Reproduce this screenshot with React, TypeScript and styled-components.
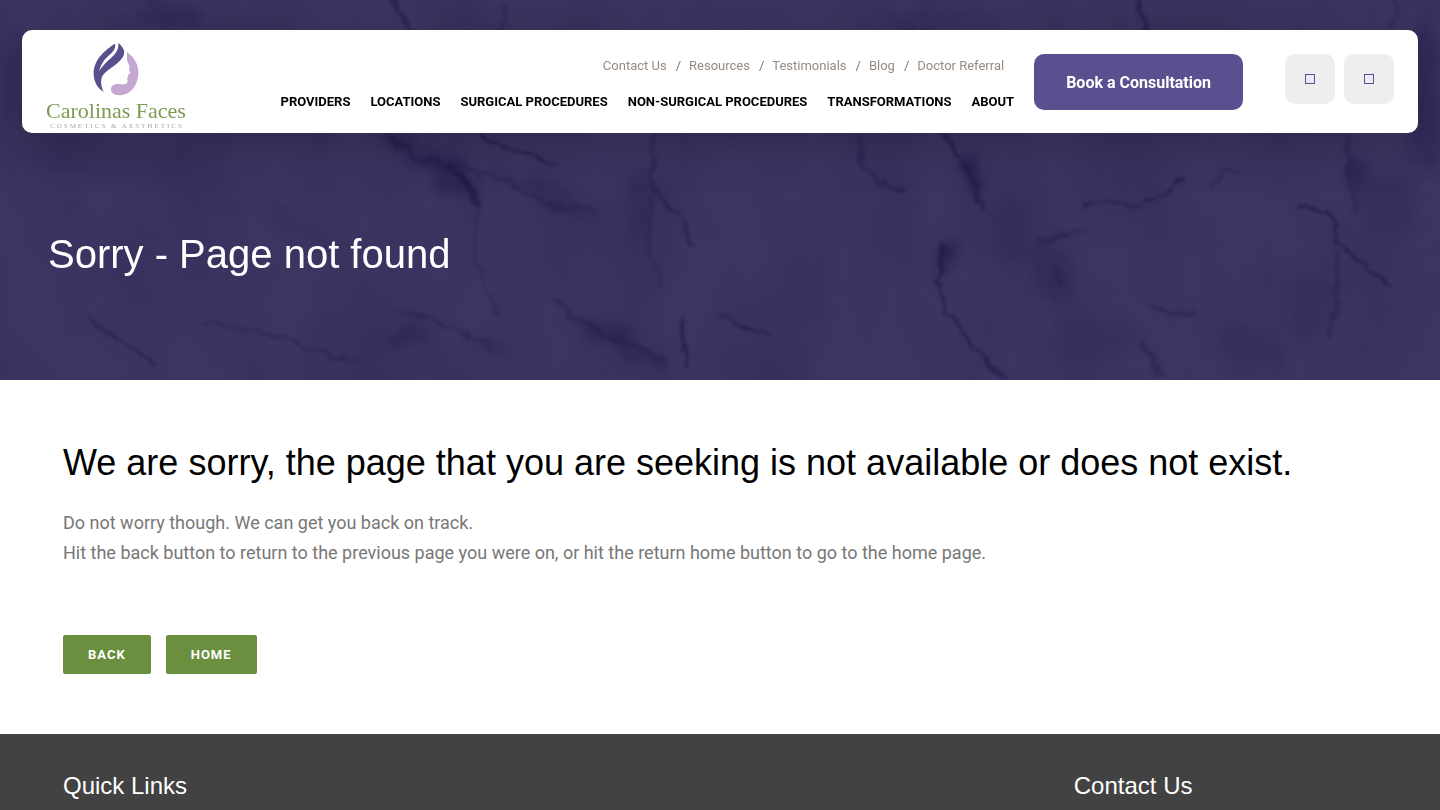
import React from "react";
import styled, { createGlobalStyle } from "styled-components";

const GlobalStyle = createGlobalStyle`
  *, *::before, *::after { box-sizing: border-box; }
  body { margin: 0; background: #fff; font-family: Roboto, "Liberation Sans", sans-serif; }
  h1, h2, h3, p, ul { margin: 0; padding: 0; }
  a { color: inherit; text-decoration: none; }
`;

const Page = styled.div`
  min-height: 100vh;
  display: flex;
  flex-direction: column;
`;

const Hero = styled.section`
  position: relative;
  isolation: isolate;
  padding: 30px 22px 100px;
  background: #3a335f;
`;

const MarbleSvg = styled.svg`
  position: absolute;
  inset: 0;
  width: 100%;
  height: 100%;
  z-index: -1;
`;

const Header = styled.header`
  display: flex;
  align-items: flex-start;
  height: 103px;
  padding: 0 24px;
  border-radius: 10px;
  background: #fff;
  box-shadow: 0 10px 50px rgba(0, 0, 0, 0.2);
`;

const LogoLink = styled.a`
  display: flex;
  flex-direction: column;
  align-items: center;
  padding-top: 12px;
  white-space: nowrap;
`;

const LogoName = styled.span`
  font-family: "Liberation Serif", serif;
  font-size: 22px;
  line-height: 24px;
  color: #7a9c51;
`;

const LogoTag = styled.span`
  padding-left: 2px;
  font-family: "Liberation Serif", serif;
  font-size: 7px;
  line-height: 6px;
  letter-spacing: 2px;
  color: #a9a6b2;
`;

const Menus = styled.div`
  flex: 1;
  display: flex;
  flex-direction: column;
  align-items: flex-end;
  padding: 26px 20px 0 0;
  white-space: nowrap;
`;

const TopList = styled.ul`
  display: flex;
  list-style: none;
  padding-right: 10px;
  font-size: 13px;
  line-height: 20px;
  color: #978b80;

  li + li::before {
    content: "/";
    padding: 0 8px 0 9px;
    color: #777;
  }
`;

const MainList = styled.ul`
  display: flex;
  gap: 20px;
  margin-top: 16px;
  list-style: none;
  font-size: 13px;
  font-weight: 700;
  line-height: 20px;
  text-transform: uppercase;
  color: #000;
`;

const BookLink = styled.a`
  margin-top: 24px;
  padding: 2px 32px 0;
  border-radius: 10px;
  background: #5b508f;
  color: #fff;
  font-size: 16px;
  font-weight: 700;
  line-height: 54px;
  white-space: nowrap;
`;

const Tools = styled.div`
  display: flex;
  gap: 9px;
  margin: 24px 0 0 42px;
`;

const ToolButton = styled.button`
  display: grid;
  place-items: center;
  width: 50px;
  height: 50px;
  padding: 0;
  border: 0;
  border-radius: 10px;
  background: #eee;
  cursor: pointer;
`;

const HeroTitle = styled.h1`
  margin: 95px 26px 0;
  font-family: "Liberation Sans", sans-serif;
  font-size: 40px;
  font-weight: 400;
  line-height: 52px;
  color: #fff;
`;

const Content = styled.main`
  padding: 60px 63px;
`;

const Title = styled.h2`
  font-family: "Liberation Sans", sans-serif;
  font-size: 36px;
  font-weight: 400;
  line-height: 46px;
  color: #000;
`;

const Copy = styled.p`
  margin-top: 22px;
  font-size: 18px;
  line-height: 30px;
  color: #777;
`;

const Actions = styled.div`
  display: flex;
  gap: 15px;
  margin-top: 67px;
`;

const ActionButton = styled.button`
  height: 39px;
  padding: 0 25px;
  border: 0;
  border-radius: 2px;
  background: #6a903f;
  color: #fff;
  font-family: inherit;
  font-size: 13px;
  font-weight: 700;
  letter-spacing: 1px;
  text-transform: uppercase;
  cursor: pointer;
`;

const Footer = styled.footer`
  flex: 1;
  display: grid;
  grid-template-columns: 10fr 3fr;
  padding: 36px 63px 8px;
  background: #424242;
`;

const FooterTitle = styled.h3`
  font-family: "Liberation Sans", sans-serif;
  font-size: 24px;
  font-weight: 400;
  line-height: 32px;
  color: #fff;
`;

const topLinks = ["Contact Us", "Resources", "Testimonials", "Blog", "Doctor Referral"];
const mainLinks = [
  "Providers",
  "Locations",
  "Surgical Procedures",
  "Non-Surgical Procedures",
  "Transformations",
  "About",
];

// Marble veins: path data, line width, strength
const veins: [string, number, number][] = [
  ["M393 -4 L402 14 L413 34", 5, 0.55],
  ["M507 4 L500 34", 3, 0.4],
  ["M910 26 L904 40", 3, 0.5],
  ["M1138 -4 L1142 14 L1146 34", 4, 0.7],
  ["M1396 -4 L1392 34", 3, 0.4],
  ["M475 130 L490 142 L514 152 L535 157 L556 164", 3, 0.75],
  ["M386 137 L413 157 L448 167", 5, 0.45],
  ["M448 165 Q464 176 470 190 L477 208", 6, 0.7],
  ["M477 208 L475 253 L487 297 L500 317", 2, 0.4],
  ["M448 160 L500 180 L551 205 L597 210", 4, 0.3],
  ["M654 133 L652 190 L680 217 L693 247", 3, 0.5],
  ["M652 190 L648 250 L662 290", 4, 0.25],
  ["M202 323 L243 328 L285 340 L318 350 L356 360", 2, 0.6],
  ["M90 317 L108 333 L133 348 L156 363", 3, 0.55],
  ["M556 298 L569 317 L611 337 L666 360", 4, 0.4],
  ["M680 318 L684 345 L686 368", 4, 0.7],
  ["M399 310 L441 323 L487 343 L490 352", 2, 0.5],
  ["M858 133 L862 167 L876 182 L904 190", 4, 0.5],
  ["M943 130 L959 157 L972 180 L982 207", 4, 0.6],
  ["M945 245 L940 268 L936 284", 5, 0.6],
  ["M936 284 L945 310 L977 350 L1006 382", 3, 0.65],
  ["M1083 207 L1106 202 L1133 208 L1161 195 L1184 178", 3, 0.7],
  ["M1210 190 L1222 172 L1240 172", 3, 0.4],
  ["M1041 240 L1062 236 L1087 226", 3, 0.45],
  ["M1055 268 L1062 288", 5, 0.4],
  ["M718 315 L735 325 L754 332 L772 333", 3, 0.7],
  ["M1300 206 L1316 209 L1331 212 L1334 226 L1342 247 L1363 263 L1390 287", 3, 0.75],
  ["M1335 250 L1337 297 L1328 337", 3, 0.4],
  ["M1147 303 L1175 315 L1197 310", 3, 0.5],
  ["M1347 133 L1349 180 L1358 213", 3, 0.4],
  ["M1142 340 L1150 355 L1161 380", 5, 0.4],
];

// Soft stains: centre, radii, turn, strength
const stains = [
  [455, 175, 32, 14, 40, 0.5],
  [405, 144, 34, 10, 35, 0.3],
  [545, 195, 60, 10, 18, 0.25],
  [971, 174, 9, 17, -8, 0.9],
  [944, 256, 10, 18, 2, 0.7],
  [620, 342, 50, 11, 26, 0.4],
  [300, 228, 50, 10, 28, 0.2],
  [640, 200, 14, 30, 0, 0.3],
  [1010, 225, 20, 34, -12, 0.2],
  [1358, 174, 10, 12, 0, 0.5],
  [1385, 200, 30, 34, -10, 0.2],
  [1310, 305, 22, 30, 8, 0.2],
  [1255, 350, 36, 16, 25, 0.2],
  [402, 338, 20, 9, 20, 0.4],
  [485, 346, 12, 9, 20, 0.3],
  [110, 160, 80, 20, 5, 0.15],
  [1050, 270, 18, 34, -20, 0.25],
  [1100, 340, 40, 20, 0, 0.15],
  [170, 16, 34, 14, 20, 0.35],
  [940, 18, 70, 10, 0, 0.15],
  [1425, 90, 12, 80, 0, 0.3],
  [10, 110, 10, 60, 0, 0.15],
];

function Marble() {
  return (
    <MarbleSvg viewBox="0 0 1440 380" preserveAspectRatio="xMidYMid slice" aria-hidden="true">
      <defs>
        <filter
          id="stain"
          filterUnits="userSpaceOnUse"
          x="-40"
          y="-40"
          width="1520"
          height="460"
          colorInterpolationFilters="sRGB"
        >
          <feTurbulence type="fractalNoise" baseFrequency="0.035" numOctaves="4" seed="8" />
          <feDisplacementMap in="SourceGraphic" scale="40" xChannelSelector="R" yChannelSelector="G" />
          <feGaussianBlur stdDeviation="6" />
        </filter>
        <filter
          id="vein"
          filterUnits="userSpaceOnUse"
          x="-40"
          y="-40"
          width="1520"
          height="460"
          colorInterpolationFilters="sRGB"
        >
          <feTurbulence type="fractalNoise" baseFrequency="0.06" numOctaves="3" seed="3" />
          <feDisplacementMap in="SourceGraphic" scale="14" xChannelSelector="R" yChannelSelector="G" />
          <feGaussianBlur stdDeviation="1.6" />
        </filter>
        <filter id="cloud" x="0" y="0" width="100%" height="100%" colorInterpolationFilters="sRGB">
          <feTurbulence type="fractalNoise" baseFrequency="0.012 0.007" numOctaves="5" seed="12" />
          <feColorMatrix values="0 0 0 0 0.13  0 0 0 0 0.1  0 0 0 0 0.27  2 0 0 0 -0.8" />
        </filter>
      </defs>
      <rect width="1440" height="380" fill="#3c3562" />
      <rect width="1440" height="380" filter="url(#cloud)" opacity="0.2" />
      <g filter="url(#stain)" fill="#211849">
        {stains.map(([x, y, rx, ry, turn, strength]) => (
          <ellipse
            key={x + "-" + y}
            cx={x}
            cy={y}
            rx={rx}
            ry={ry}
            opacity={strength}
            transform={`rotate(${turn} ${x} ${y})`}
          />
        ))}
      </g>
      <g filter="url(#vein)" fill="none" stroke="#1d1443" opacity="0.85">
        {veins.map(([d, width, strength]) => (
          <path key={d} d={d} strokeWidth={width} opacity={strength} />
        ))}
      </g>
    </MarbleSvg>
  );
}

function LogoMark() {
  return (
    <svg width="48" height="57" viewBox="216 51 144 171" aria-hidden="true">
      <path
        fill="#594f8d"
        d="M285 56C252 76 219 108 221 148C222 171 231 188 251 201C244 187 241 171 245 158C250 142 273 130 290 116C306 102 315 91 312 77C310 68 302 60 295 53C298 77 281 92 265 106C253 117 244 128 238 138C242 117 254 103 268 90C281 78 288 69 285 56Z"
      />
      <path
        fill="#c4a8d2"
        d="M321 82C344 98 356 120 355 145C354 184 329 211 299 211C281 211 271 202 273 190C276 177 290 176 304 178C315 179 322 176 322 170L323 164L320 160L325 156L323 151L331 145L327 132C332 119 319 113 321 100Z"
      />
    </svg>
  );
}

function GlyphBox() {
  return (
    <svg width="10" height="10" viewBox="0 0 10 10" aria-hidden="true">
      <rect x="0.5" y="0.5" width="9" height="9" fill="#ece9f8" stroke="#5b508f" />
    </svg>
  );
}

export default function App() {
  return (
    <Page>
      <GlobalStyle />
      <Hero>
        <Marble />
        <Header>
          <LogoLink href="#">
            <LogoMark />
            <LogoName>Carolinas Faces</LogoName>
            <LogoTag>COSMETICS &amp; AESTHETICS</LogoTag>
          </LogoLink>
          <Menus>
            <TopList>
              {topLinks.map((label) => (
                <li key={label}>
                  <a href="#">{label}</a>
                </li>
              ))}
            </TopList>
            <nav aria-label="Main">
              <MainList>
                {mainLinks.map((label) => (
                  <li key={label}>
                    <a href="#">{label}</a>
                  </li>
                ))}
              </MainList>
            </nav>
          </Menus>
          <BookLink href="#">Book a Consultation</BookLink>
          <Tools>
            <ToolButton type="button" aria-label="Call">
              <GlyphBox />
            </ToolButton>
            <ToolButton type="button" aria-label="Search">
              <GlyphBox />
            </ToolButton>
          </Tools>
        </Header>
        <HeroTitle>Sorry - Page not found</HeroTitle>
      </Hero>
      <Content>
        <Title>We are sorry, the page that you are seeking is not available or does not exist.</Title>
        <Copy>
          Do not worry though. We can get you back on track.
          <br />
          Hit the back button to return to the previous page you were on, or hit the return home button to go to
          the home page.
        </Copy>
        <Actions>
          <ActionButton type="button">Back</ActionButton>
          <ActionButton type="button">Home</ActionButton>
        </Actions>
      </Content>
      <Footer>
        <FooterTitle>Quick Links</FooterTitle>
        <FooterTitle>Contact Us</FooterTitle>
      </Footer>
    </Page>
  );
}
